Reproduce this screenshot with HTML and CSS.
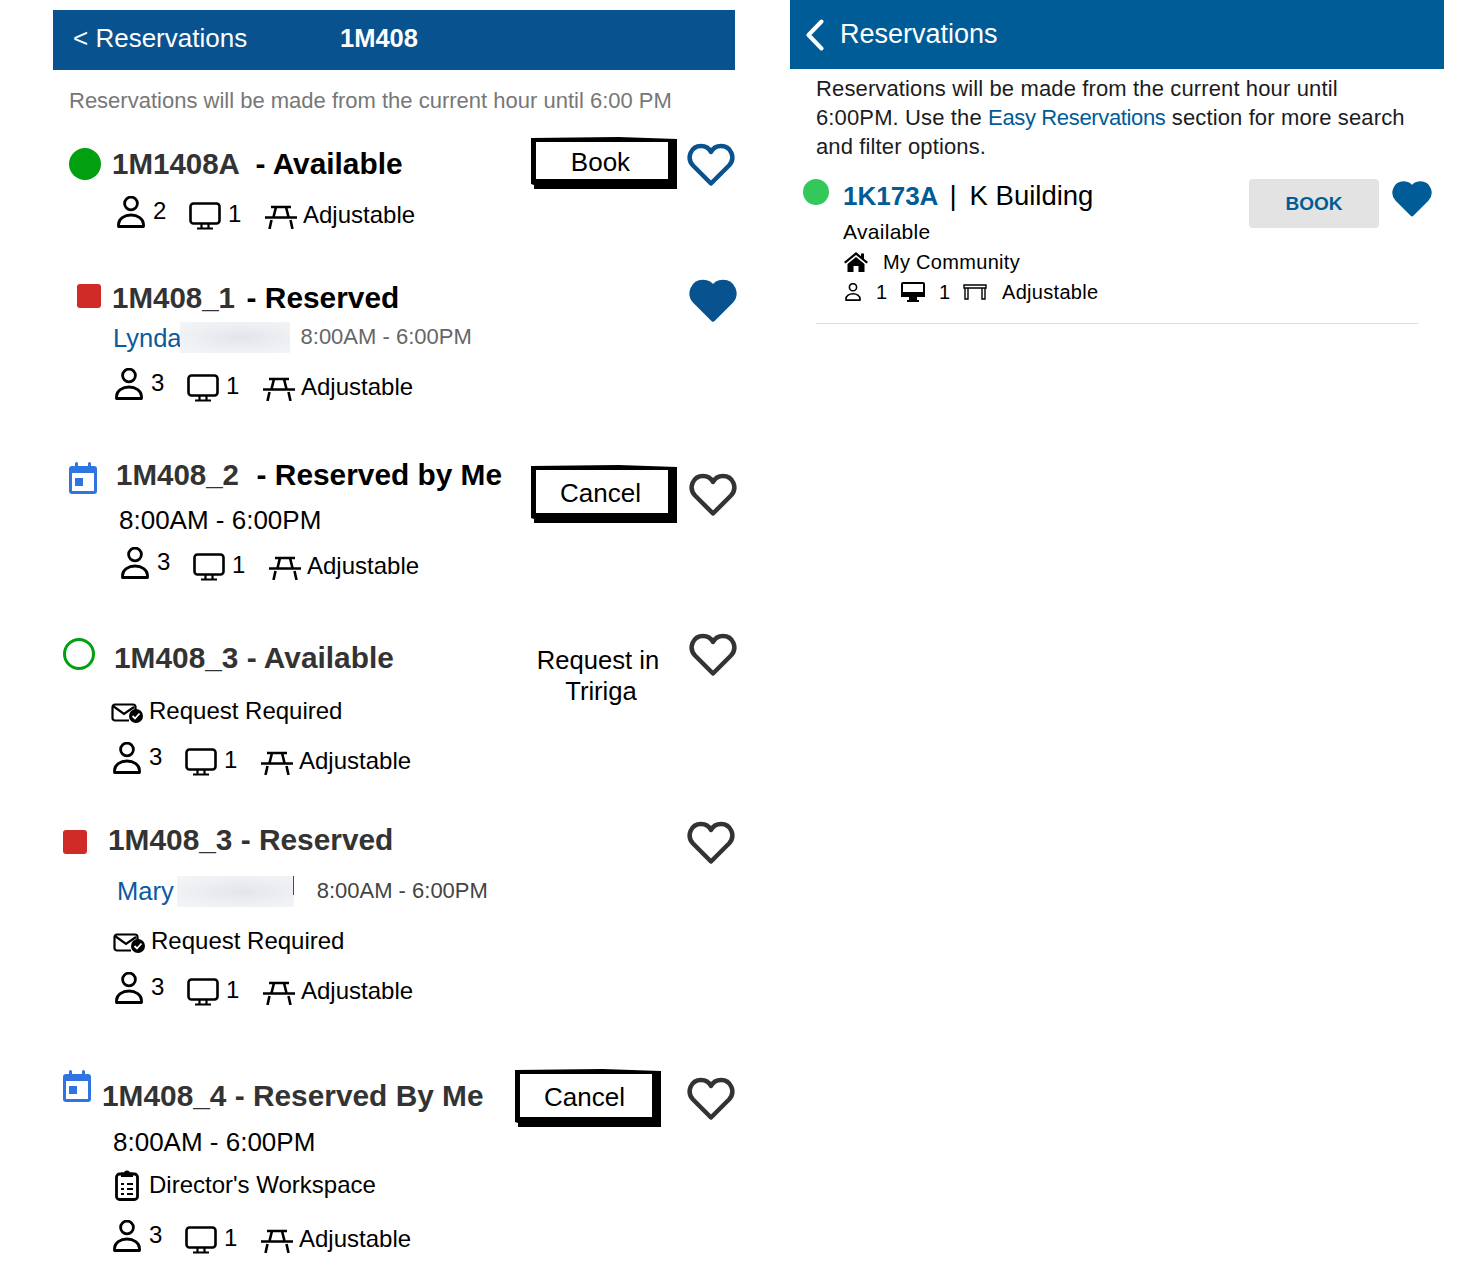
FILE: index.html
```html
<!DOCTYPE html>
<html lang="en">
    <head>
        <meta charset="utf-8">
        <title>Reservations</title>
        <link rel="stylesheet" href="styles.css">
    </head>
    <body>
        <svg class="defs" width="0" height="0">
            <symbol id="person" viewBox="0 0 28 32"><circle cx="14" cy="7.500" r="6.400" fill="none" stroke="currentColor" stroke-width="2.800"/><path d="M1.500 30.500v-2C1.500 23 7.500 19 14 19s12.500 4 12.500 9.500v2z" fill="none" stroke="currentColor" stroke-width="2.800" stroke-linejoin="round"/></symbol>
            <symbol id="monitor" viewBox="0 0 32 28"><rect x="1.500" y="1.500" width="29" height="20" rx="3" fill="none" stroke="currentColor" stroke-width="2.600"/><path d="M12.500 22v4.500M19.500 22v4.500M8 26.500h16" fill="none" stroke="currentColor" stroke-width="2.200"/></symbol>
            <symbol id="table" viewBox="0 0 32 24"><path d="M6 2h20M11 2L8.500 12M21 2l2.500 10M0 12.500h32M6.500 15L4.500 24M25.500 15l2 9" fill="none" stroke="currentColor" stroke-width="2.600"/></symbol>
            <symbol id="heart" viewBox="0 0 48 44"><path d="M24 40.500L6 22.500C-1 15 4 3 14 3c4.500 0 8 2 10 6 2-4 5.500-6 10-6 10 0 15 12 8 19.500z" stroke-linejoin="round"/></symbol>
            <symbol id="calendar" viewBox="0 0 28 32"><path d="M3 4h22a3 3 0 0 1 3 3v22a3 3 0 0 1-3 3H3a3 3 0 0 1-3-3V7a3 3 0 0 1 3-3z" fill="#2f74e0"/><rect x="6" y="0" width="3" height="6" rx="1.500" fill="#2f74e0"/><rect x="19" y="0" width="3" height="6" rx="1.500" fill="#2f74e0"/><rect x="3" y="11" width="22" height="18" fill="#fff"/><rect x="6" y="16" width="8" height="8" fill="#2f74e0"/></symbol>
            <symbol id="mail" viewBox="0 0 32 20"><path d="M18 17.500H4A2.500 2.500 0 0 1 1.500 15V4A2.500 2.500 0 0 1 4 1.500h18A2.500 2.500 0 0 1 24.500 4v4" fill="none" stroke="currentColor" stroke-width="2.200"/><path d="M2 3l11 8 10-7" fill="none" stroke="currentColor" stroke-width="2.200"/><circle cx="25" cy="13" r="7" fill="currentColor"/><path d="M21.500 13l2.500 2.500 4.500-5" fill="none" stroke="#fff" stroke-width="1.800"/></symbol>
            <symbol id="clipboard" viewBox="0 0 24 32"><rect x="1.500" y="5" width="21" height="25.500" rx="3" fill="none" stroke="currentColor" stroke-width="2.800"/><path d="M7 7V4.500h3a2 2 0 0 1 4 0h3V7z" fill="currentColor" stroke="currentColor" stroke-width="2"/><path d="M6 15h3M12 15h6M6 20h3M12 20h6M6 25h3M12 25h6" stroke="currentColor" stroke-width="2"/></symbol>
            <symbol id="home" viewBox="0 0 24 20"><path d="M12 0L0 10l1.500 1.500L12 3l10.500 8.500L24 10l-4-3.300V1.500h-3v2.700z" fill="currentColor"/><path d="M3.500 12L12 5l8.500 7v8H14.500v-6h-5v6H3.500z" fill="currentColor"/></symbol>
            <symbol id="monitor-fill" viewBox="0 0 24 20"><rect x="0" y="0" width="24" height="15" rx="2" fill="currentColor"/><rect x="2" y="2" width="20" height="10" fill="#fff"/><rect x="0" y="10" width="24" height="5" fill="currentColor"/><path d="M8 15h8v3h2v2H6v-2h2z" fill="currentColor"/></symbol>
            <symbol id="desk" viewBox="0 0 24 16"><path d="M1 1h22v3H1zM2 4v11h3V4M19 4v11h3V4" fill="none" stroke="currentColor" stroke-width="1.400"/></symbol>
        </svg>

        <div class="page">
            <div class="left">
                <div class="left-header">
                    <span class="back-link">&lt; Reservations</span>
                    <span class="left-title">1M408</span>
                </div>
                <div class="note line">Reservations will be made from the current hour until 6:00 PM</div>

                <div class="res r1">
                    <div class="res-main">
                        <div class="line head">
                            <span class="status dot"></span>
                            <span class="title"><span class="room">1M1408A</span>&nbsp; - Available</span>
                        </div>
                        <div class="line specs">
                            <svg class="ic-person"><use href="#person"/></svg><span class="count">2</span>
                            <svg class="ic-monitor"><use href="#monitor"/></svg><span class="count-desk">1</span>
                            <svg class="ic-table"><use href="#table"/></svg><span class="adjust">Adjustable</span>
                        </div>
                    </div>
                    <div class="res-side">
                        <a class="btn"><span>Book</span></a>
                        <svg class="heart heart-blue"><use href="#heart"/></svg>
                    </div>
                </div>

                <div class="res r2">
                    <div class="res-main">
                        <div class="line head">
                            <span class="status square"></span>
                            <span class="title"><span class="room">1M408_1</span>&nbsp; - Reserved</span>
                        </div>
                        <div class="line person-row">
                            <span class="name">Lynda</span><span class="redact"></span><span class="time-gray">8:00AM - 6:00PM</span>
                        </div>
                        <div class="line specs">
                            <svg class="ic-person"><use href="#person"/></svg><span class="count">3</span>
                            <svg class="ic-monitor"><use href="#monitor"/></svg><span class="count-desk">1</span>
                            <svg class="ic-table"><use href="#table"/></svg><span class="adjust">Adjustable</span>
                        </div>
                    </div>
                    <div class="res-side">
                        <svg class="heart heart-fill"><use href="#heart"/></svg>
                    </div>
                </div>

                <div class="res r3">
                    <div class="res-main">
                        <div class="line head">
                            <svg class="status cal"><use href="#calendar"/></svg>
                            <span class="title"><span class="room">1M408_2</span>&nbsp; - Reserved by Me</span>
                        </div>
                        <div class="line time">8:00AM - 6:00PM</div>
                        <div class="line specs">
                            <svg class="ic-person"><use href="#person"/></svg><span class="count">3</span>
                            <svg class="ic-monitor"><use href="#monitor"/></svg><span class="count-desk">1</span>
                            <svg class="ic-table"><use href="#table"/></svg><span class="adjust">Adjustable</span>
                        </div>
                    </div>
                    <div class="res-side">
                        <a class="btn btn-tall"><span>Cancel</span></a>
                        <svg class="heart heart-dark"><use href="#heart"/></svg>
                    </div>
                </div>

                <div class="res r4">
                    <div class="res-main">
                        <div class="line head">
                            <span class="status ring"></span>
                            <span class="title muted">1M408_3 - Available</span>
                        </div>
                        <div class="line extra">
                            <svg class="ic-mail"><use href="#mail"/></svg><span>Request Required</span>
                        </div>
                        <div class="line specs">
                            <svg class="ic-person"><use href="#person"/></svg><span class="count">3</span>
                            <svg class="ic-monitor"><use href="#monitor"/></svg><span class="count-desk">1</span>
                            <svg class="ic-table"><use href="#table"/></svg><span class="adjust">Adjustable</span>
                        </div>
                    </div>
                    <div class="res-side">
                        <div class="request">Request in <span class="request-last">Tririga</span></div>
                        <svg class="heart heart-dark"><use href="#heart"/></svg>
                    </div>
                </div>

                <div class="res r5">
                    <div class="res-main">
                        <div class="line head">
                            <span class="status square"></span>
                            <span class="title muted">1M408_3 - Reserved</span>
                        </div>
                        <div class="line person-row">
                            <span class="name">Mary</span><span class="redact"></span><span class="time-gray">8:00AM - 6:00PM</span>
                        </div>
                        <div class="line extra">
                            <svg class="ic-mail"><use href="#mail"/></svg><span>Request Required</span>
                        </div>
                        <div class="line specs">
                            <svg class="ic-person"><use href="#person"/></svg><span class="count">3</span>
                            <svg class="ic-monitor"><use href="#monitor"/></svg><span class="count-desk">1</span>
                            <svg class="ic-table"><use href="#table"/></svg><span class="adjust">Adjustable</span>
                        </div>
                    </div>
                    <div class="res-side">
                        <svg class="heart heart-dark"><use href="#heart"/></svg>
                    </div>
                </div>

                <div class="res r6">
                    <div class="res-main">
                        <div class="line head">
                            <svg class="status cal"><use href="#calendar"/></svg>
                            <span class="title muted">1M408_4 - Reserved By Me</span>
                        </div>
                        <div class="line time">8:00AM - 6:00PM</div>
                        <div class="line extra">
                            <svg class="ic-clip"><use href="#clipboard"/></svg><span>Director's Workspace</span>
                        </div>
                        <div class="line specs">
                            <svg class="ic-person"><use href="#person"/></svg><span class="count">3</span>
                            <svg class="ic-monitor"><use href="#monitor"/></svg><span class="count-desk">1</span>
                            <svg class="ic-table"><use href="#table"/></svg><span class="adjust">Adjustable</span>
                        </div>
                    </div>
                    <div class="res-side">
                        <a class="btn btn-tall"><span>Cancel</span></a>
                        <svg class="heart heart-dark"><use href="#heart"/></svg>
                    </div>
                </div>
            </div>

            <div class="right">
                <div class="right-header">
                    <svg class="chevron" viewBox="0 0 18 32"><path d="M15.500 2.500L2.500 16l13 13.500" fill="none" stroke="#fff" stroke-width="4" stroke-linecap="round" stroke-linejoin="round"/></svg>
                    <span>Reservations</span>
                </div>
                <p class="intro">Reservations will be made from the current hour until 6:00PM. Use the <a class="link">Easy Reservations</a> section for more search and filter options.</p>
                <div class="card">
                    <span class="card-dot"></span>
                    <div class="card-main">
                        <div class="card-title"><span class="card-room">1K173A</span><span class="card-sep">|</span>K Building</div>
                        <div class="card-line card-avail">Available</div>
                        <div class="card-line card-comm"><svg class="ic-home"><use href="#home"/></svg><span>My Community</span></div>
                        <div class="card-line card-specs">
                            <svg class="mini-person"><use href="#person"/></svg><span class="mini-count">1</span>
                            <svg class="mini-monitor"><use href="#monitor-fill"/></svg><span class="mini-count-desk">1</span>
                            <svg class="mini-desk"><use href="#desk"/></svg><span>Adjustable</span>
                        </div>
                    </div>
                    <a class="book">BOOK</a>
                    <svg class="card-heart"><use href="#heart"/></svg>
                </div>
                <div class="divider"></div>
            </div>
        </div>
    </body>
</html>
```

FILE: styles.css
```css
body {
    margin: 0;
    background-color: #fff;
    color: #000;
    font-family: "Liberation Sans", Arial, sans-serif;
    font-size: 24px;
}

.defs {
    position: absolute;
}

.page {
    display: flex;
    align-items: flex-start;
}

svg {
    display: block;
    flex: none;
}

.left {
    width: 682px;
    margin-left: 53px;
    margin-top: 10px;
}

.left-header {
    display: flex;
    align-items: center;
    height: 60px;
    padding-bottom: 4px;
    box-sizing: border-box;
    background-color: #08528f;
    color: #fff;
    font-size: 26px;
}

.back-link {
    width: 287px;
    padding-left: 20px;
    box-sizing: border-box;
}

.left-title {
    font-size: 25.500px;
    font-weight: bold;
}

.line {
    display: flex;
    align-items: center;
    height: 36px;
}

.note {
    margin-top: 13px;
    padding-left: 16px;
    color: #777;
    font-size: 22px;
}

.res {
    display: flex;
    justify-content: space-between;
}

.head {
    font-weight: bold;
}

.title {
    font-size: 29.850px;
    white-space: nowrap;
}

.room {
    font-size: 29.500px;
}

.room,
.muted {
    color: #333;
}

.status {
    flex: none;
}

.dot,
.ring {
    width: 32px;
    height: 32px;
    border-radius: 50%;
    box-sizing: border-box;
}

.dot {
    background-color: #00a010;
}

.ring {
    border: 3px solid #00a010;
}

.square {
    width: 24px;
    height: 24px;
    border-radius: 3px;
    background-color: #d02b26;
}

.cal {
    width: 28px;
    height: 32px;
}

.specs {
    font-size: 24px;
}

.ic-person {
    width: 28px;
    height: 32px;
    margin-right: 8px;
    margin-bottom: 5px;
}

.count {
    width: 36px;
    margin-top: -7px;
}

.ic-monitor {
    width: 32px;
    height: 28px;
    margin-top: 3px;
    margin-right: 7px;
}

.count-desk {
    width: 37px;
    margin-top: -1px;
}

.ic-table {
    width: 32px;
    height: 24px;
    margin-top: 5px;
    margin-right: 6px;
}

.adjust {
    margin-top: 2px;
}

.name {
    color: #0b5aa0;
    font-size: 25.500px;
}

.redact {
    display: block;
    height: 31px;
    background: radial-gradient(ellipse at 55% 50%, #e2e5ea 0%, #eef0f4 60%, #f4f5f7 100%);
}

.time-gray {
    color: #666;
    font-size: 22px;
}

.r5 .time-gray {
    color: #444;
}

.time {
    font-size: 26px;
}

.extra {
    font-size: 24px;
}

.ic-mail {
    width: 32px;
    height: 20px;
    margin-right: 6px;
    margin-top: 3px;
}

.ic-clip {
    width: 24px;
    height: 32px;
    margin-right: 10px;
}

.res-side {
    display: flex;
    align-items: flex-start;
}

.btn {
    display: block;
    width: 146px;
    height: 52px;
    padding: 5px 9px 10px 5px;
    box-sizing: border-box;
    background-color: #000;
    clip-path: polygon(0 1px, 60% 0, 100% 2px, 100% 100%, 3px 100%, 3px 48px, 0 47px);
}

.btn span {
    display: flex;
    align-items: center;
    justify-content: center;
    height: 100%;
    padding: 3px 3px 0 0;
    box-sizing: border-box;
    background-color: #fff;
    font-size: 26px;
}

.btn-tall {
    height: 58px;
    clip-path: polygon(0 1px, 60% 0, 100% 2px, 100% 100%, 3px 100%, 3px 54px, 0 53px);
}

.heart {
    width: 48px;
    height: 44px;
}

.heart-blue {
    fill: none;
    stroke: #08528f;
    stroke-width: 4.500px;
}

.heart-dark {
    fill: none;
    stroke: #333;
    stroke-width: 4.500px;
}

.heart-fill {
    fill: #08528f;
    stroke: #08528f;
    stroke-width: 4.500px;
}

.request {
    width: 146px;
    padding-right: 12px;
    box-sizing: border-box;
    font-size: 25.600px;
    line-height: 31px;
    text-align: center;
}

.request-last {
    display: block;
    padding-left: 6px;
}

/* each reservation sits a little differently in the reference */
.r1 {
    margin-top: 27px;
}

.r1 .head {
    padding-left: 16px;
    gap: 11px;
}

.r1 .room {
    margin-right: -1px;
}

.r1 .specs {
    margin-top: 14px;
    padding-left: 64px;
}

.r1 .res-side {
    margin-top: -9px;
}

.r1 .heart {
    margin-left: 10px;
    margin-top: 6px;
}

.r2 {
    margin-top: 48px;
}

.r2 .head {
    padding-left: 24px;
    gap: 11px;
}

.r2 .room {
    margin-right: -5px;
}

.r2 .square {
    margin-bottom: 4px;
}

.r2 .person-row {
    margin-top: 3px;
    padding-left: 60px;
}

.r2 .name {
    margin-top: 3px;
}

.r2 .redact {
    width: 110px;
    margin-left: -2px;
}

.r2 .time-gray {
    margin-left: 11px;
}

.r2 .specs {
    margin-top: 13px;
    padding-left: 62px;
}

.r2 .res-side {
    margin-right: -2px;
    margin-top: -1px;
}

.r3 {
    margin-top: 53px;
}

.r3 .head {
    padding-left: 16px;
    gap: 19px;
}

.r3 .room {
    margin-right: 1px;
}

.r3 .cal {
    margin-top: 6px;
}

.r3 .time {
    margin-top: 9px;
    padding-left: 66px;
}

.r3 .specs {
    margin-top: 9px;
    padding-left: 68px;
}

.r3 .res-side {
    margin-right: -2px;
    margin-top: 8px;
}

.r3 .heart {
    margin-left: 12px;
    margin-top: 8px;
}

.r4 {
    margin-top: 57px;
}

.r4 .head {
    padding-left: 10px;
    gap: 19px;
}

.r4 .ring {
    margin-bottom: 8px;
}

.r4 .extra {
    margin-top: 17px;
    padding-left: 58px;
}

.r4 .specs {
    margin-top: 13px;
    padding-left: 60px;
}

.r4 .res-side {
    margin-right: -2px;
    margin-top: -6px;
}

.r4 .request {
    margin-top: 11px;
}

.r4 .heart {
    margin-left: 12px;
    margin-top: -1px;
}

.r5 {
    margin-top: 44px;
}

.r5 .head {
    padding-left: 10px;
    gap: 21px;
}

.r5 .square {
    margin-top: 4px;
}

.r5 .person-row {
    margin-top: 15px;
    padding-left: 64px;
}

.r5 .redact {
    width: 117px;
    margin-left: 3px;
    background:
        linear-gradient(#0b5aa0, #0b5aa0) right top / 1px 19px no-repeat,
        radial-gradient(ellipse at 55% 50%, #e2e5ea 0%, #eef0f4 60%, #f4f5f7 100%);
}

.r5 .time-gray {
    margin-left: 23px;
}

.r5 .extra {
    margin-top: 14px;
    padding-left: 60px;
}

.r5 .specs {
    margin-top: 13px;
    padding-left: 62px;
}

.r5 .res-side {
    margin-top: -1px;
}

.r6 {
    margin-top: 70px;
}

.r6 .head {
    padding-left: 10px;
    gap: 11px;
}

.r6 .cal {
    margin-bottom: 20px;
}

.r6 .time {
    margin-top: 10px;
    padding-left: 60px;
}

.r6 .extra {
    margin-top: 7px;
    padding-left: 62px;
}

.r6 .specs {
    margin-top: 17px;
    padding-left: 60px;
}

.r6 .res-side {
    margin-top: -9px;
}

.r6 .heart {
    margin-left: 26px;
    margin-top: 8px;
}

/* right panel */
.right {
    width: 654px;
    margin-left: 55px;
}

.right-header {
    display: flex;
    align-items: center;
    gap: 16px;
    height: 69px;
    padding-left: 16px;
    background-color: #005c97;
    color: #fff;
    font-size: 27px;
}

.chevron {
    width: 18px;
    height: 32px;
}

.intro {
    margin: 5px 26px 0;
    font-size: 22px;
    line-height: 29px;
    letter-spacing: 0.130px;
    color: #1c1c1e;
}

.link {
    color: #005c97;
    letter-spacing: -0.350px;
}

.card {
    display: flex;
    align-items: flex-start;
    margin-top: 18px;
    padding-left: 13px;
}

.card-dot {
    flex: none;
    width: 26px;
    height: 26px;
    border-radius: 50%;
    background-color: #34c85a;
}

.card-main {
    flex: 1;
    padding-left: 14px;
}

.card-title {
    font-size: 27.500px;
    line-height: 34px;
}

.card-room {
    color: #005c97;
    font-size: 26px;
    font-weight: bold;
}

.card-sep {
    margin: 0 13px 0 11px;
}

.card-line {
    display: flex;
    align-items: center;
    height: 30px;
    font-size: 20px;
    letter-spacing: 0.300px;
}

.card-avail {
    margin-top: 4px;
    font-size: 21px;
}

.ic-home {
    width: 24px;
    height: 20px;
    margin-right: 15px;
    margin-left: 1px;
}

.mini-person {
    width: 18px;
    height: 18px;
    margin-left: 1px;
    margin-right: 14px;
}

.mini-count {
    width: 25px;
}

.mini-monitor {
    width: 24px;
    height: 20px;
    margin-right: 14px;
}

.mini-count-desk {
    width: 24px;
}

.mini-desk {
    width: 24px;
    height: 16px;
    margin-right: 15px;
}

.book {
    display: flex;
    align-items: center;
    justify-content: center;
    flex: none;
    width: 130px;
    height: 49px;
    border-radius: 4px;
    background-color: #e3e3e3;
    color: #005c97;
    font-size: 19px;
    font-weight: bold;
}

.card-heart {
    width: 40px;
    height: 38px;
    margin-top: 1px;
    margin-left: 13px;
    margin-right: 12px;
    fill: #005c97;
    stroke: #005c97;
    stroke-width: 4.500px;
}

.divider {
    height: 1px;
    margin: 16px 26px 0;
    background-color: #ddd;
}
```
